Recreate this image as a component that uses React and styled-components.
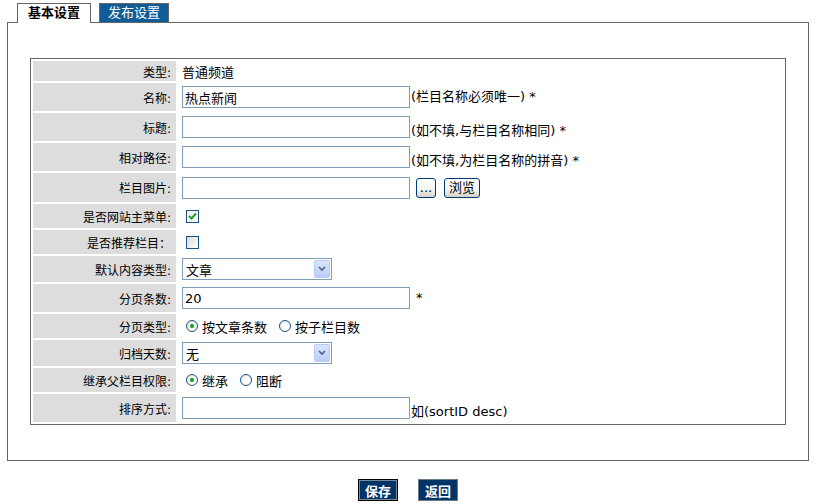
import React from "react";
import styled, { createGlobalStyle } from "styled-components";

const GlobalStyle = createGlobalStyle`
  html, body {
    margin: 0;
    padding: 0;
    background: #fff;
  }
  body {
    font-family: "DejaVu Sans", "Noto Sans CJK SC", sans-serif;
    font-size: 12px;
    color: #000;
  }
`;

const rows = [
  { label: "类型:", h: 20, kind: "text", value: "普通频道" },
  { label: "名称:", h: 28, kind: "input", value: "热点新闻", hint: "(栏目名称必须唯一) *" },
  { label: "标题:", h: 28, kind: "input", value: "", hint: "(如不填,与栏目名称相同) *" },
  { label: "相对路径:", h: 28, kind: "input", value: "", hint: "(如不填,为栏目名称的拼音) *" },
  { label: "栏目图片:", h: 29, kind: "browse" },
  { label: "是否网站主菜单:", h: 24, kind: "check", checked: true },
  { label: "是否推荐栏目：", h: 24, kind: "check", checked: false },
  { label: "默认内容类型:", h: 26, kind: "select", value: "文章" },
  { label: "分页条数:", h: 28, kind: "input", value: "20", star: true },
  { label: "分页类型:", h: 24, kind: "radio", options: ["按文章条数", "按子栏目数"] },
  { label: "归档天数:", h: 26, kind: "select", value: "无" },
  { label: "继承父栏目权限:", h: 24, kind: "radio", options: ["继承", "阻断"] },
  { label: "排序方式:", h: 28, kind: "input", value: "", hint: "如(sortID desc)", tight: true },
];

const Page = styled.div`
  padding: 3px 8px 0 7px;
  height: 504px;
  box-sizing: border-box;
`;

const TabBar = styled.div`
  display: flex;
  align-items: flex-start;
  gap: 8px;
  height: 19px;
  padding-left: 10px;
`;

const Tab = styled.div`
  position: relative;
  z-index: 1;
  box-sizing: border-box;
  width: ${(p) => (p.$active ? 74 : 70)}px;
  height: ${(p) => (p.$active ? 20 : 19)}px;
  border: 1px solid #666;
  border-bottom: none;
  background: ${(p) => (p.$active ? "#fff" : "#0f5c97")};
  color: ${(p) => (p.$active ? "#000" : "#fff")};
  font-weight: ${(p) => (p.$active ? "bold" : "normal")};
  font-size: 13px;
  line-height: 18px;
  text-align: center;
`;

const Panel = styled.div`
  border: 1px solid #666;
  padding: 35px 22px;
`;

const FormTable = styled.div`
  display: grid;
  grid-template-columns: 143px 1fr;
  gap: 2px;
  padding: 2px;
  border: 1px solid #666;
`;

const LabelCell = styled.div`
  height: ${(p) => p.$h}px;
  background: #dddddd;
  display: flex;
  align-items: center;
  justify-content: flex-end;
  padding-right: 5px;
  white-space: nowrap;
`;

const ValueCell = styled.div`
  height: ${(p) => p.$h}px;
  display: flex;
  align-items: center;
  padding-left: 4px;
  font-size: 13px;
  white-space: nowrap;
`;

const Field = styled.div`
  display: flex;
  align-items: ${(p) => (p.$bottom ? "flex-end" : "center")};
`;

const TextInput = styled.input`
  box-sizing: border-box;
  width: 228px;
  height: 22px;
  margin: 0;
  padding: 0 2px;
  border: 1px solid #7f9db9;
  font: inherit;
  font-size: 13px;
  color: #000;
  background: #fff;
  outline: none;
`;

const Hint = styled.span`
  margin-left: ${(p) => (p.$gap ? p.$gap : 1)}px;
  line-height: 14px;
`;

const XpButton = styled.button`
  box-sizing: border-box;
  height: 20px;
  width: ${(p) => p.$w}px;
  margin: 0 0 0 ${(p) => p.$ml}px;
  padding: 0;
  border: 1px solid #003c74;
  border-radius: 3px;
  background: linear-gradient(#ffffff, #f3f3ef 60%, #d6d0c5);
  font: inherit;
  font-size: 13px;
  line-height: 16px;
  color: #000;
`;

const CheckBox = styled.span`
  box-sizing: border-box;
  width: 13px;
  height: 13px;
  margin-left: 4px;
  border: 1px solid #1c5180;
  background: ${(p) =>
    p.$checked
      ? "linear-gradient(135deg, #f0f0ec, #ffffff)"
      : "linear-gradient(135deg, #dcdcd7, #ffffff)"};
  display: flex;
  align-items: center;
  justify-content: center;
`;

const RadioGroup = styled.div`
  display: flex;
  align-items: center;
`;

const RadioDot = styled.span`
  box-sizing: border-box;
  width: 12px;
  height: 12px;
  margin-left: ${(p) => (p.$first ? 4 : 12)}px;
  border-radius: 50%;
  border: 1px solid #1c5180;
  background: radial-gradient(circle at 65% 65%, #ffffff 30%, #dcdcd7 100%);
  display: flex;
  align-items: center;
  justify-content: center;
  &::after {
    content: "";
    display: ${(p) => (p.$checked ? "block" : "none")};
    width: 4px;
    height: 4px;
    border-radius: 50%;
    background: #21a121;
    box-shadow: 0 0 1px #6fd56f;
  }
`;

const RadioText = styled.span`
  margin-left: 4px;
`;

const Select = styled.div`
  box-sizing: border-box;
  width: 150px;
  height: 22px;
  border: 1px solid #7f9db9;
  display: flex;
  align-items: center;
  justify-content: space-between;
  padding-left: 3px;
  background: #fff;
`;

const SelectArrow = styled.span`
  box-sizing: border-box;
  width: 16px;
  height: 18px;
  margin-right: 1px;
  border: 1px solid #b9cbf3;
  border-radius: 2px;
  background: linear-gradient(#dbe6fd, #b8cdf8);
  display: flex;
  align-items: center;
  justify-content: center;
`;

const Footer = styled.div`
  display: flex;
  justify-content: center;
  gap: 20px;
  margin-top: 18px;
`;

const DarkButton = styled.button`
  box-sizing: border-box;
  width: 40px;
  height: 22px;
  margin: 0;
  padding: 0;
  background: #003366;
  color: #fff;
  font: inherit;
  font-size: 13px;
  font-weight: bold;
  border: 1px solid ${(p) => (p.$focus ? "#000" : "#6b7b8c")};
  box-shadow: ${(p) => (p.$focus ? "inset 0 0 0 1px #7a8a99" : "none")};
`;

const Check = () => (
  <svg width="9" height="8" viewBox="0 0 9 8">
    <path d="M1 4 L3.5 6.5 L8 1.5" fill="none" stroke="#21a121" strokeWidth="2" />
  </svg>
);

const Chevron = () => (
  <svg width="8" height="6" viewBox="0 0 8 6">
    <path d="M1 1 L4 4 L7 1" fill="none" stroke="#4d6185" strokeWidth="1.6" />
  </svg>
);

const renderValue = (row) => {
  switch (row.kind) {
    case "text":
      return <span>{row.value}</span>;
    case "input":
      return (
        <Field $bottom={!row.value}>
          <TextInput defaultValue={row.value} readOnly />
          {row.hint && <Hint $gap={row.tight ? 1 : 1}>{row.hint}</Hint>}
          {row.star && <Hint $gap={6}>*</Hint>}
        </Field>
      );
    case "browse":
      return (
        <Field>
          <TextInput defaultValue="" readOnly />
          <XpButton $w={20} $ml={6}>...</XpButton>
          <XpButton $w={36} $ml={8}>浏览</XpButton>
        </Field>
      );
    case "check":
      return <CheckBox $checked={row.checked}>{row.checked && <Check />}</CheckBox>;
    case "select":
      return (
        <Select>
          <span>{row.value}</span>
          <SelectArrow>
            <Chevron />
          </SelectArrow>
        </Select>
      );
    case "radio":
      return (
        <RadioGroup>
          {row.options.map((opt, i) => (
            <React.Fragment key={opt}>
              <RadioDot $first={i === 0} $checked={i === 0} />
              <RadioText>{opt}</RadioText>
            </React.Fragment>
          ))}
        </RadioGroup>
      );
    default:
      return null;
  }
};

export default function App() {
  return (
    <Page>
      <GlobalStyle />
      <TabBar>
        <Tab $active>基本设置</Tab>
        <Tab>发布设置</Tab>
      </TabBar>
      <Panel>
        <FormTable>
          {rows.map((row) => (
            <React.Fragment key={row.label}>
              <LabelCell $h={row.h}>{row.label}</LabelCell>
              <ValueCell $h={row.h}>{renderValue(row)}</ValueCell>
            </React.Fragment>
          ))}
        </FormTable>
      </Panel>
      <Footer>
        <DarkButton $focus>保存</DarkButton>
        <DarkButton>返回</DarkButton>
      </Footer>
    </Page>
  );
}
